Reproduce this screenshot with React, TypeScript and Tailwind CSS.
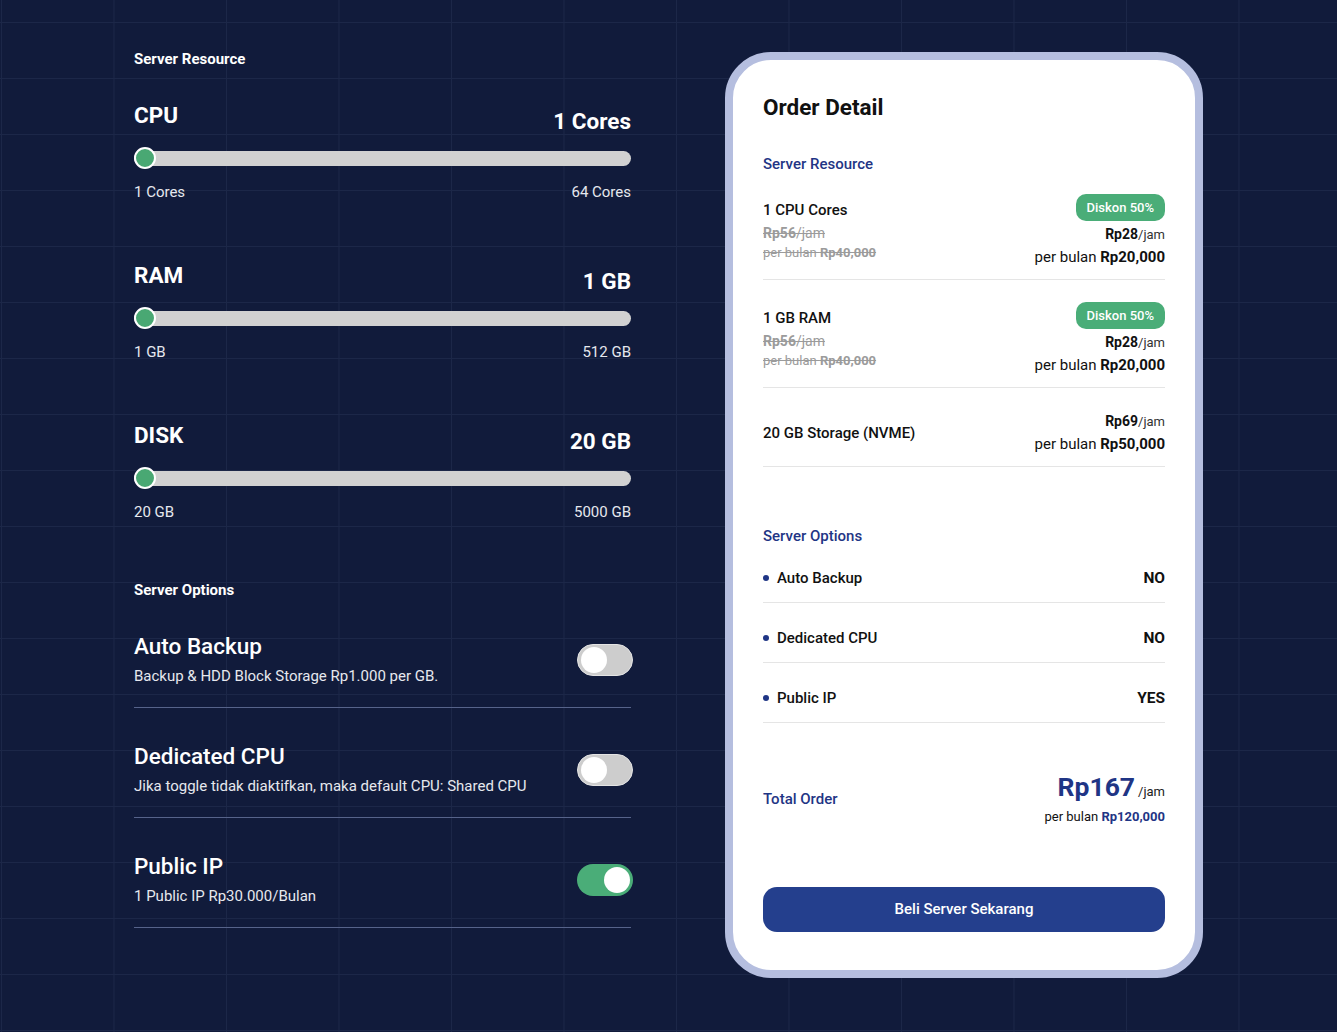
import React from 'react'

// ─── Data ─────────────────────────────────────────────────────────────────────

const RESOURCES = [
  { name: 'CPU', value: '1 Cores', min: '1 Cores', max: '64 Cores' },
  { name: 'RAM', value: '1 GB', min: '1 GB', max: '512 GB' },
  { name: 'DISK', value: '20 GB', min: '20 GB', max: '5000 GB' },
]

const OPTIONS = [
  { title: 'Auto Backup', desc: 'Backup & HDD Block Storage Rp1.000 per GB.', on: false },
  { title: 'Dedicated CPU', desc: 'Jika toggle tidak diaktifkan, maka default CPU: Shared CPU', on: false },
  { title: 'Public IP', desc: '1 Public IP Rp30.000/Bulan', on: true },
]

const ORDER_ITEMS = [
  { name: '1 CPU Cores', old: ['Rp56', 'Rp40,000'], price: 'Rp28', month: 'Rp20,000', discount: true },
  { name: '1 GB RAM', old: ['Rp56', 'Rp40,000'], price: 'Rp28', month: 'Rp20,000', discount: true },
  { name: '20 GB Storage (NVME)', old: null, price: 'Rp69', month: 'Rp50,000', discount: false },
]

const ORDER_OPTIONS = [
  { name: 'Auto Backup', value: 'NO' },
  { name: 'Dedicated CPU', value: 'NO' },
  { name: 'Public IP', value: 'YES' },
]

// ─── Pieces ───────────────────────────────────────────────────────────────────

function Slider() {
  return (
    <div className="relative h-[22px] flex items-center">
      <div className="w-full h-[15px] rounded-full bg-[#d1d1d1]" />
      <div className="absolute left-0 top-0 w-[22px] h-[22px] rounded-full bg-[#49a873] border-2 border-white" />
    </div>
  )
}

function Toggle({ on }: { on: boolean }) {
  return (
    <div
      className={
        on
          ? 'w-[56px] h-[32px] rounded-full bg-[#4aad78] flex items-center justify-end px-[3px] shrink-0 -mr-[2px]'
          : 'w-[56px] h-[32px] rounded-full bg-[#cdcdcd] border border-[#e4e4e4] flex items-center justify-start px-[3px] shrink-0 -mr-[2px]'
      }
    >
      <div className="w-[26px] h-[26px] rounded-full bg-white" />
    </div>
  )
}

// ─── App ──────────────────────────────────────────────────────────────────────

export default function App() {
  return (
    <div
      className="w-full h-[1032px] overflow-hidden flex items-start pl-[134px] pt-[49px] bg-[#111b3b] bg-[linear-gradient(to_right,#1c2748_1px,transparent_1px),linear-gradient(to_bottom,#1c2748_1px,transparent_1px)] bg-[size:112.5px_56px] bg-[position:1px_22px]"
      style={{ fontFamily: 'Roboto, "Noto Sans", sans-serif' }}
    >
      {/* Left column */}
      <div className="w-[497px] shrink-0 text-white">
        <p className="text-[15px] leading-[20px] font-bold">Server Resource</p>

        <div className="mt-[33px]">
          {RESOURCES.map((r) => (
            <div key={r.name} className="mb-[60px]">
              <div className="flex justify-between items-start">
                <span className="text-[22.5px] leading-[26px] font-bold">{r.name}</span>
                <span className="text-[22.5px] leading-[26px] font-bold pt-[6px]">{r.value}</span>
              </div>
              <div className="mt-[13px]">
                <Slider />
              </div>
              <div className="mt-[13px] flex justify-between text-[15px] leading-[20px] text-[#e6e8ee]">
                <span>{r.min}</span>
                <span>{r.max}</span>
              </div>
            </div>
          ))}
        </div>

        <p className="-mt-[2px] text-[15px] leading-[20px] font-bold">Server Options</p>

        <div className="mt-[33px]">
          {OPTIONS.map((o, i) => (
            <div
              key={o.title}
              className={
                i === 0
                  ? 'pb-[21px] border-b border-[#56638a] flex items-center justify-between'
                  : 'pt-[35px] pb-[21px] border-b border-[#56638a] flex items-center justify-between'
              }
            >
              <div>
                <p className="text-[22.5px] leading-[26px] font-medium">{o.title}</p>
                <p className="mt-[7px] text-[15px] leading-[20px] text-[#e6e8ee]">{o.desc}</p>
              </div>
              <Toggle on={o.on} />
            </div>
          ))}
        </div>
      </div>

      {/* Order card */}
      <div className="ml-[94px] mt-[3px] w-[478px] shrink-0 rounded-[46px] border-[8px] border-[#b5bedf] bg-white px-[30px] pt-[33px] pb-[38px] text-[#111]">
        <h2 className="text-[22.5px] leading-[28px] font-bold">Order Detail</h2>

        <p className="mt-[33px] text-[15px] leading-[20px] font-medium text-[#1f3585]">Server Resource</p>

        <div className="mt-[20px]">
          {ORDER_ITEMS.map((it, i) =>
            it.discount ? (
              <div
                key={it.name}
                className={
                  i === 0
                    ? 'pb-[12px] border-b border-[#e5e5e5] flex justify-between items-start'
                    : 'pt-[22px] pb-[12px] border-b border-[#e5e5e5] flex justify-between items-start'
                }
              >
                <div className="pt-[6px]">
                  <p className="text-[15px] leading-[20px] font-medium">{it.name}</p>
                  <p className="mt-[3px] text-[14px] leading-[20px] text-[#9b9b9b] line-through">
                    <span className="font-bold">{it.old?.[0]}</span>/jam
                  </p>
                  <p className="mt-[1px] text-[13px] leading-[18px] text-[#9b9b9b] line-through">
                    per bulan <span className="font-bold">{it.old?.[1]}</span>
                  </p>
                </div>
                <div className="flex flex-col items-end">
                  <span className="h-[27px] px-[11px] flex items-center rounded-[10px] bg-[#4aad78] text-white text-[13px] font-medium">
                    Diskon 50%
                  </span>
                  <p className="mt-[3px] text-[14px] leading-[20px]">
                    <span className="font-bold">{it.price}</span>
                    <span className="text-[13px] text-[#333]">/jam</span>
                  </p>
                  <p className="mt-[2px] text-[15px] leading-[20px]">
                    per bulan <span className="font-bold">{it.month}</span>
                  </p>
                </div>
              </div>
            ) : (
              <div
                key={it.name}
                className="pt-[23px] pb-[12px] border-b border-[#e5e5e5] flex justify-between items-center"
              >
                <p className="text-[15px] leading-[20px] font-medium">{it.name}</p>
                <div className="flex flex-col items-end">
                  <p className="text-[14px] leading-[20px]">
                    <span className="font-bold">{it.price}</span>
                    <span className="text-[13px] text-[#333]">/jam</span>
                  </p>
                  <p className="mt-[2px] text-[15px] leading-[20px]">
                    per bulan <span className="font-bold">{it.month}</span>
                  </p>
                </div>
              </div>
            ),
          )}
        </div>

        <p className="mt-[59px] text-[15px] leading-[20px] font-medium text-[#1f3585]">Server Options</p>

        <div>
          {ORDER_OPTIONS.map((o, i) => (
            <div
              key={o.name}
              className={
                i === 0
                  ? 'pt-[22px] pb-[14px] border-b border-[#e5e5e5] flex justify-between items-center'
                  : 'pt-[25px] pb-[14px] border-b border-[#e5e5e5] flex justify-between items-center'
              }
            >
              <div className="flex items-center gap-[8px]">
                <span className="w-[6px] h-[6px] rounded-full bg-[#1f3585]" />
                <span className="text-[15px] leading-[20px] font-medium">{o.name}</span>
              </div>
              <span className="text-[15.5px] leading-[20px] font-bold">{o.value}</span>
            </div>
          ))}
        </div>

        <div className="mt-[48px] flex justify-between items-center">
          <p className="text-[15px] leading-[20px] font-medium text-[#1f3585]">Total Order</p>
          <div className="flex flex-col items-end">
            <p className="leading-[32px]">
              <span className="text-[26.5px] font-bold text-[#1f3585]">Rp167</span>
              <span className="ml-[3px] text-[13px] text-[#222]">/jam</span>
            </p>
            <p className="text-[13px] leading-[18px]">
              per bulan <span className="font-bold text-[#1f3585]">Rp120,000</span>
            </p>
          </div>
        </div>

        <button className="mt-[61px] w-full h-[45px] rounded-[14px] bg-[#243f8d] text-white text-[15px] font-medium">
          Beli Server Sekarang
        </button>
      </div>
    </div>
  )
}
